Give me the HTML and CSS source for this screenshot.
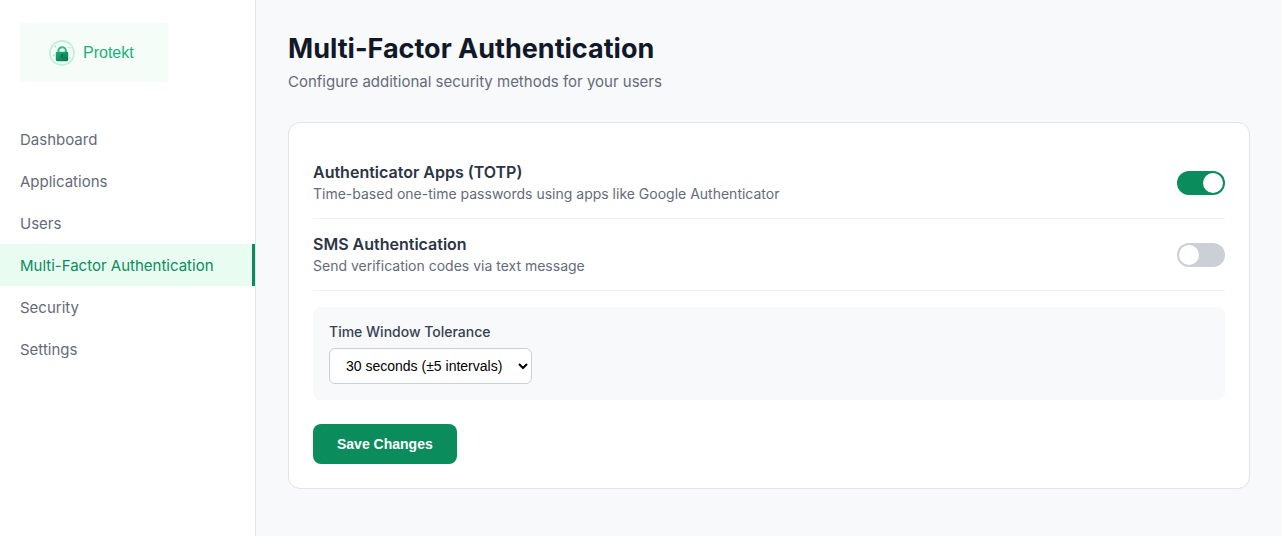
FILE: index.html
```html
<!DOCTYPE html>
<html lang="en">
<head>
<meta charset="utf-8">
<meta name="viewport" content="width=device-width, initial-scale=1">
<title>Multi-Factor Authentication - Protekt</title>
<link rel="stylesheet" href="styles.css">
</head>
<body>
<div class="layout">
  <aside class="sidebar">
    <div class="brand">
      <svg class="brand-mark" viewBox="0 -1 26 27" aria-hidden="true">
        <defs>
          <linearGradient id="lock" x1="0" y1="0" x2="1" y2="1">
            <stop offset="0" stop-color="#15b67a"/>
            <stop offset="1" stop-color="#08714b"/>
          </linearGradient>
        </defs>
        <circle cx="13" cy="13" r="12" fill="#f6fdf9" stroke="#c6ecdb" stroke-width="1.8"/>
        <g fill="#a9dfc9">
          <circle cx="6.3" cy="6.6" r=".9"/>
          <circle cx="5" cy="15.5" r=".9"/>
          <rect x="19" y="7.2" width="2" height="1"/>
          <rect x="20" y="17.4" width="2" height="1"/>
        </g>
        <path d="M9.4 12.5v-2a3.7 3.3 0 0 1 7.4 0v2" fill="none" stroke="#20c189" stroke-width="2"/>
        <rect x="6.8" y="11.8" width="12.4" height="9.4" rx="1.4" fill="url(#lock)"/>
        <circle cx="13.1" cy="15.3" r="1" fill="#075e3e"/>
        <path d="M12.6 15.5h1v2.6h-1z" fill="#075e3e"/>
      </svg>
      <span class="brand-name">Protekt</span>
    </div>
    <nav class="nav">
      <a class="nav-link" href="#">Dashboard</a>
      <a class="nav-link" href="#">Applications</a>
      <a class="nav-link" href="#">Users</a>
      <a class="nav-link active" href="#" aria-current="page">Multi-Factor Authentication</a>
      <a class="nav-link" href="#">Security</a>
      <a class="nav-link" href="#">Settings</a>
    </nav>
  </aside>
  <main class="main">
    <h1 class="title">Multi-Factor Authentication</h1>
    <p class="subtitle">Configure additional security methods for your users</p>
    <form class="card">
      <div class="row">
        <label class="row-text" for="totp">
          <span class="row-title">Authenticator Apps (TOTP)</span>
          <span class="row-desc">Time-based one-time passwords using apps like Google Authenticator</span>
        </label>
        <input class="toggle" id="totp" type="checkbox" checked>
      </div>
      <div class="row">
        <label class="row-text" for="sms">
          <span class="row-title">SMS Authentication</span>
          <span class="row-desc">Send verification codes via text message</span>
        </label>
        <input class="toggle" id="sms" type="checkbox">
      </div>
      <div class="panel">
        <label class="panel-label" for="tolerance">Time Window Tolerance</label>
        <select class="select" id="tolerance">
          <option>30 seconds (±5 intervals)</option>
        </select>
      </div>
      <button class="save" type="button">Save Changes</button>
    </form>
  </main>
</div>
</body>
</html>
```
FILE: styles.css
```css
* { box-sizing: border-box; }
body {
  margin: 0;
  background: #f8f9fb;
  color: #111827;
  font-family: Inter, "Liberation Sans", sans-serif;
  font-size: 16px;
}
.layout { display: flex; min-height: 100vh; }
.sidebar {
  width: 256px;
  flex-shrink: 0;
  padding-top: 23px;
  background: #fff;
  border-right: 1px solid #e0e3e8;
}
.brand {
  display: flex;
  align-items: center;
  gap: 8px;
  width: 148px;
  height: 59px;
  margin-left: 20px;
  padding-left: 29px;
  background: linear-gradient(100deg, #f6fdf9 75%, #f3fcf7);
}
.brand-mark { width: 26px; height: 27px; }
.brand-name {
  color: #18b27a;
  font-family: "Liberation Sans", Arial, sans-serif;
  font-size: 16px;
}
.nav { display: flex; flex-direction: column; margin-top: 36px; }
.nav-link {
  padding: 12px 20px 10px;
  color: #646b7a;
  font-size: 15px;
  line-height: 20px;
  text-decoration: none;
  white-space: nowrap;
}
.nav-link.active {
  padding-right: 17px;
  border-right: 3px solid #0a8c5c;
  background: #e8fcf1;
  color: #0a8c5c;
}
.main { flex: 1; min-width: 0; padding: 32px; }
.title { margin: 0 0 6px; font-size: 27px; font-weight: 700; line-height: 34px; }
.subtitle { margin: 0 0 30px; color: #646b7a; font-size: 15px; line-height: 20px; }
.card {
  padding: 24px;
  border: 1px solid #e0e3e8;
  border-radius: 12px;
  background: #fff;
}
.row {
  display: flex;
  align-items: center;
  justify-content: space-between;
  gap: 16px;
  padding: 16px 0;
  border-bottom: 1px solid #f1f2f4;
}
.row-text { display: flex; flex-direction: column; gap: 4px; }
.row-title { color: #2b3544; font-size: 16px; font-weight: 600; line-height: 18px; }
.row-desc { color: #646b7a; font-size: 14px; line-height: 17px; }
.toggle {
  display: flex;
  appearance: none;
  flex-shrink: 0;
  width: 48px;
  height: 24px;
  margin: 0;
  padding: 2px;
  border-radius: 12px;
  background: #cbcfd6;
}
.toggle::before {
  content: "";
  width: 20px;
  height: 20px;
  border-radius: 50%;
  background: #fff;
}
.toggle:checked { justify-content: flex-end; background: #0a8c5c; }
.panel {
  display: flex;
  flex-direction: column;
  align-items: flex-start;
  gap: 8px;
  margin: 16px 0 24px;
  padding: 16px;
  border-radius: 8px;
  background: #f8f9fb;
}
.panel-label { color: #374151; font-size: 14px; font-weight: 500; line-height: 17px; }
.select {
  height: 36px;
  padding: 0 12px;
  border: 1px solid #cbcfd6;
  border-radius: 6px;
  background-color: #fff;
  color: #000;
  font-family: "Liberation Sans", Arial, sans-serif;
  font-size: 14px;
}
.save {
  display: block;
  height: 40px;
  padding: 0 24px;
  border: 0;
  border-radius: 8px;
  background: #0a8c5c;
  color: #fff;
  font-family: "Liberation Sans", Arial, sans-serif;
  font-size: 14px;
  font-weight: 700;
}
```
